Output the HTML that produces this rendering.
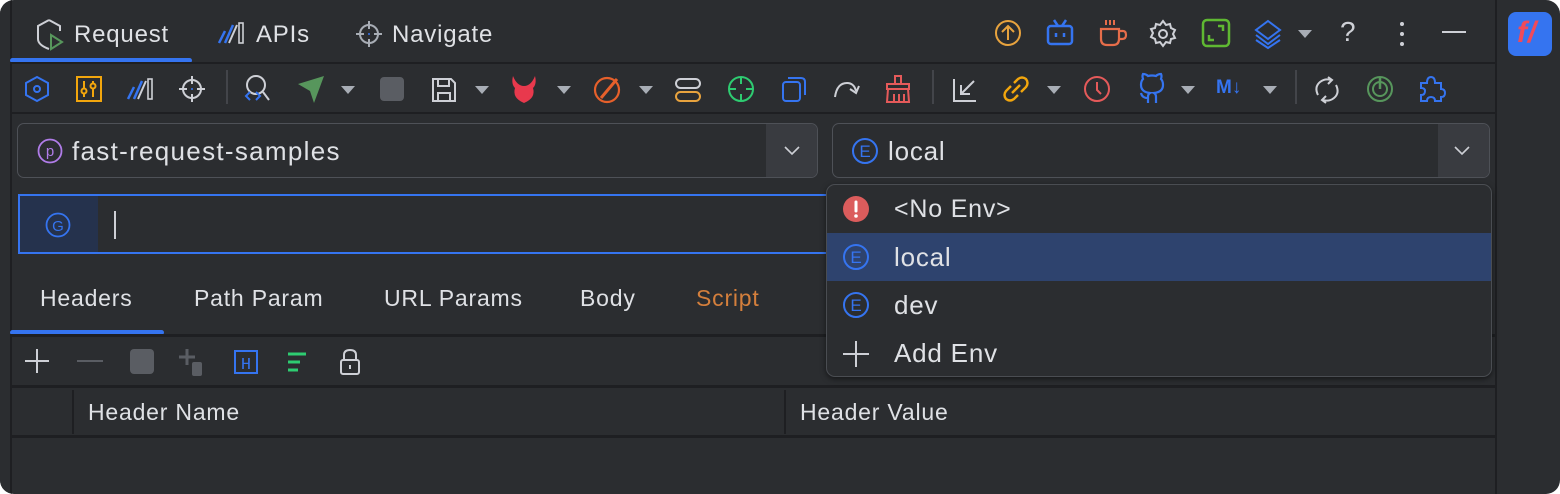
<!DOCTYPE html>
<html><head><meta charset="utf-8"><style>
html,body{margin:0;padding:0;background:#fff;width:1560px;height:494px;overflow:hidden}
#w{position:absolute;left:0;top:0;width:1560px;height:494px;background:#2b2d30;border-radius:14px;overflow:hidden;font-family:"Liberation Sans",sans-serif;color:#dfe1e5}
.a{position:absolute}
.hl{position:absolute;height:2px;background:#1e1f22}
svg{position:absolute;overflow:visible}
.t{position:absolute;font-size:23px;white-space:nowrap;letter-spacing:0.8px}
.dd{position:absolute;width:0;height:0;border-left:7px solid transparent;border-right:7px solid transparent;border-top:8px solid #a8adb5}
.sep{position:absolute;width:2px;background:#43454a}
</style></head><body><div id="w">
<div class="a" style="left:0;top:0;width:10px;height:494px;background:#2b2d30;border-right:2px solid #1e1f22"></div>
<div class="a" style="left:1495px;top:0;width:2px;height:494px;background:#1e1f22"></div>
<!-- tab bar -->
<svg style="left:36px;top:18px" width="30" height="32" viewBox="0 0 30 32"><path d="M13 2 L2 8 V21 Q2 27 13 31" fill="none" stroke="#ced0d6" stroke-width="2"/><path d="M13 2 L24 8 V13" fill="none" stroke="#ced0d6" stroke-width="2"/><path d="M15 17 L26 24 L15 31 Z" fill="none" stroke="#57965c" stroke-width="2"/></svg>
<div class="t" style="left:74px;top:21px;font-size:24px">Request</div>
<div class="a" style="left:10px;top:58px;width:182px;height:5px;background:#3574f0;border-radius:3px"></div>
<svg style="left:217px;top:21px" width="30" height="24"><path d="M2 22 L8 10 M8 22 L16 4" stroke="#3574f0" stroke-width="2.5"/><path d="M12 22 L20 4" stroke="#ced0d6" stroke-width="2"/><rect x="22" y="2" width="4" height="20" fill="none" stroke="#ced0d6" stroke-width="1.6"/></svg>
<div class="t" style="left:256px;top:21px;font-size:24px">APIs</div>
<svg style="left:355px;top:20px" width="28" height="28"><circle cx="14" cy="14" r="9" fill="none" stroke="#a8adb5" stroke-width="2"/><path d="M14 1V9M14 19V27M1 14H9M19 14H27" stroke="#a8adb5" stroke-width="2"/><circle cx="14" cy="14" r="1" fill="#3574f0"/></svg>
<div class="t" style="left:392px;top:21px;font-size:24px">Navigate</div>
<!-- top right icons -->
<svg style="left:994px;top:19px" width="28" height="28"><circle cx="14" cy="14" r="12" fill="none" stroke="#e8a33e" stroke-width="2"/><path d="M14 21V7M8 13L14 7L20 13" fill="none" stroke="#e8a33e" stroke-width="2"/></svg>
<svg style="left:1046px;top:19px" width="28" height="28"><rect x="2" y="7" width="24" height="18" rx="3" fill="none" stroke="#3574f0" stroke-width="2.5"/><path d="M8 1L12 7M20 1L16 7" stroke="#3574f0" stroke-width="2.5"/><path d="M10 14V18M18 14V18" stroke="#3574f0" stroke-width="2.5"/></svg>
<svg style="left:1098px;top:17px" width="30" height="30"><path d="M3 12H21V22Q21 28 15 28H9Q3 28 3 22Z" fill="none" stroke="#e66d4a" stroke-width="2.2"/><path d="M21 14H25Q28 14 28 18Q28 22 24 22H21" fill="none" stroke="#e66d4a" stroke-width="2.2"/><path d="M8 3V8M12 3V8M16 3V8" stroke="#e66d4a" stroke-width="2"/></svg>
<svg style="left:1149px;top:19px" width="28" height="28"><path d="M14 2l3 4 4-1 1 4 4 2-2 4 2 4-4 1-1 4-4-1-3 4-3-4-4 1-1-4-4-2 2-4-2-4 4-1 1-4 4 1z" fill="none" stroke="#ced0d6" stroke-width="2"/><circle cx="14" cy="15" r="4" fill="none" stroke="#ced0d6" stroke-width="2"/></svg>
<svg style="left:1202px;top:19px" width="28" height="28"><rect x="1" y="1" width="26" height="26" rx="4" fill="none" stroke="#5fb832" stroke-width="2.5"/><path d="M16 7H21V12M12 21H7V16" fill="none" stroke="#5fb832" stroke-width="2.5"/></svg>
<svg style="left:1253px;top:18px" width="30" height="30"><path d="M15 3L27 12L15 21L3 12Z" fill="none" stroke="#3574f0" stroke-width="2"/><path d="M3 17L15 26L27 17M3 22L15 30L27 22" fill="none" stroke="#3574f0" stroke-width="2"/></svg>
<div class="dd" style="left:1298px;top:30px"></div>
<div class="t" style="left:1340px;top:16px;font-size:28px;color:#ced0d6">?</div>
<div class="a" style="left:1400px;top:22px;width:4px;height:4px;border-radius:2px;background:#ced0d6;box-shadow:0 10px 0 #ced0d6,0 20px 0 #ced0d6"></div>
<div class="a" style="left:1442px;top:31px;width:24px;height:2px;background:#ced0d6"></div>
<div class="a" style="left:1508px;top:12px;width:44px;height:44px;border-radius:8px;background:#3574f0"></div>
<div class="t" style="left:1517px;top:16px;font-size:30px;font-weight:bold;color:#f04a5a;font-style:italic">f/</div>
<div class="hl" style="left:10px;top:62px;width:1485px"></div>
<!-- toolbar -->
<svg style="left:24px;top:76px" width="26" height="26"><path d="M13 1L24 7V19L13 25L2 19V7Z" fill="none" stroke="#3574f0" stroke-width="2"/><circle cx="13" cy="13" r="3" fill="none" stroke="#3574f0" stroke-width="2"/></svg>
<svg style="left:76px;top:76px" width="26" height="26"><rect x="1" y="1" width="24" height="24" fill="none" stroke="#f2a60d" stroke-width="2"/><path d="M8 5V21M17 5V21" stroke="#f2a60d" stroke-width="2"/><circle cx="8" cy="15" r="2.5" fill="#2b2d30" stroke="#f2a60d" stroke-width="2"/><circle cx="17" cy="10" r="2.5" fill="#2b2d30" stroke="#f2a60d" stroke-width="2"/></svg>
<svg style="left:126px;top:77px" width="30" height="24"><path d="M2 22 L8 10 M8 22 L16 4" stroke="#3574f0" stroke-width="2.5"/><path d="M12 22 L20 4" stroke="#ced0d6" stroke-width="2"/><rect x="22" y="2" width="4" height="20" fill="none" stroke="#ced0d6" stroke-width="1.6"/></svg>
<svg style="left:178px;top:75px" width="28" height="28"><circle cx="14" cy="14" r="9" fill="none" stroke="#ced0d6" stroke-width="2"/><path d="M14 1V9M14 19V27M1 14H9M19 14H27" stroke="#ced0d6" stroke-width="2"/><circle cx="14" cy="14" r="1" fill="#3574f0"/></svg>
<div class="sep" style="left:226px;top:70px;height:34px"></div>
<svg style="left:242px;top:74px" width="30" height="30"><circle cx="14" cy="11" r="9" fill="none" stroke="#ced0d6" stroke-width="2"/><path d="M21 18L27 26" stroke="#ced0d6" stroke-width="2"/><path d="M8 18L4 22L8 26M14 18L18 22L14 26" fill="none" stroke="#3574f0" stroke-width="2"/></svg>
<svg style="left:296px;top:75px" width="30" height="30"><path d="M2 9L28 1L18 28L14 16Z" fill="#57965c"/></svg>
<div class="dd" style="left:341px;top:86px"></div>
<div class="a" style="left:380px;top:77px;width:24px;height:24px;border-radius:4px;background:#5a5d63"></div>
<svg style="left:431px;top:77px" width="26" height="26"><path d="M2 2H20L24 6V24H2Z" fill="none" stroke="#ced0d6" stroke-width="2"/><path d="M7 2V9H18V2M7 24V16H19V24" fill="none" stroke="#ced0d6" stroke-width="2"/></svg>
<div class="dd" style="left:475px;top:86px"></div>
<svg style="left:509px;top:74px" width="30" height="30"><path d="M4 2Q2 10 6 14Q3 24 15 29Q27 24 24 14Q28 10 26 2Q22 12 15 12Q8 12 4 2Z" fill="#e8394d"/></svg>
<div class="dd" style="left:557px;top:86px"></div>
<svg style="left:593px;top:75px" width="30" height="30"><circle cx="14" cy="15" r="12" fill="none" stroke="#e6602b" stroke-width="2.2"/><path d="M8 23L24 4" stroke="#e6602b" stroke-width="3"/></svg>
<div class="dd" style="left:639px;top:86px"></div>
<svg style="left:675px;top:77px" width="26" height="26"><rect x="1" y="2" width="24" height="9" rx="4.5" fill="none" stroke="#ced0d6" stroke-width="2"/><rect x="1" y="15" width="24" height="9" rx="4.5" fill="none" stroke="#e8a33e" stroke-width="2"/></svg>
<svg style="left:727px;top:75px" width="28" height="28"><circle cx="14" cy="14" r="12" fill="none" stroke="#2ecc71" stroke-width="2"/><path d="M14 2V9M14 19V26M2 14H9M19 14H26" stroke="#2ecc71" stroke-width="2"/></svg>
<svg style="left:781px;top:76px" width="26" height="26"><rect x="2" y="6" width="17" height="19" rx="3" fill="none" stroke="#3574f0" stroke-width="2"/><path d="M7 2H20Q24 2 24 6V19" fill="none" stroke="#3574f0" stroke-width="2"/></svg>
<svg style="left:832px;top:79px" width="28" height="22"><path d="M3 18Q5 4 15 4Q22 4 24 12" fill="none" stroke="#ced0d6" stroke-width="2"/><path d="M18 10L24 14L27 7" fill="none" stroke="#ced0d6" stroke-width="2"/></svg>
<svg style="left:884px;top:74px" width="28" height="30"><rect x="11" y="2" width="6" height="8" fill="none" stroke="#e55a5a" stroke-width="2"/><path d="M3 10H25V15H3ZM4 15L3 28H25L24 15M10 20V28M15 20V28M20 20V28" fill="none" stroke="#e55a5a" stroke-width="2"/></svg>
<div class="sep" style="left:932px;top:70px;height:34px"></div>
<svg style="left:952px;top:77px" width="26" height="26"><path d="M2 2V24H24" fill="none" stroke="#ced0d6" stroke-width="2"/><path d="M22 4L9 17M9 8V17H18" fill="none" stroke="#ced0d6" stroke-width="2"/></svg>
<svg style="left:1002px;top:75px" width="28" height="28"><path d="M12 8L16 4Q20 1 24 4Q27 8 24 12L19 17M16 20L12 24Q8 27 4 24Q1 20 4 16L9 11M10 18L18 10" fill="none" stroke="#f2a60d" stroke-width="2.4"/></svg>
<div class="dd" style="left:1047px;top:86px"></div>
<svg style="left:1083px;top:75px" width="28" height="28"><circle cx="14" cy="14" r="12" fill="none" stroke="#e55a5a" stroke-width="2"/><path d="M14 7V15L18 19" fill="none" stroke="#e55a5a" stroke-width="2"/></svg>
<svg style="left:1136px;top:73px" width="32" height="32"><path d="M12 30V25Q6 25 5 20M20 30V24Q20 21 18 20Q27 19 27 12Q27 8 25 6Q26 3 25 1Q22 1 20 3Q16 2 12 3Q10 1 7 1Q6 3 7 6Q5 8 5 12Q5 19 14 20Q12 21 12 24" fill="none" stroke="#3574f0" stroke-width="2.2"/></svg>
<div class="dd" style="left:1181px;top:86px"></div>
<div class="t" style="left:1216px;top:77px;font-size:19px;font-weight:bold;color:#3574f0;letter-spacing:0">M↓</div>
<div class="dd" style="left:1263px;top:86px"></div>
<div class="sep" style="left:1295px;top:70px;height:34px"></div>
<svg style="left:1312px;top:75px" width="30" height="30"><path d="M6 20Q2 12 8 7Q13 3 19 5M24 10Q28 18 22 23Q17 27 11 25" fill="none" stroke="#ced0d6" stroke-width="2"/><path d="M16 2L20 5L16 9M14 28L10 25L14 21" fill="none" stroke="#ced0d6" stroke-width="2"/></svg>
<svg style="left:1366px;top:75px" width="28" height="28"><circle cx="14" cy="14" r="12" fill="none" stroke="#57965c" stroke-width="2"/><circle cx="14" cy="14" r="7" fill="none" stroke="#57965c" stroke-width="2"/><path d="M14 3V14" stroke="#57965c" stroke-width="2.5"/></svg>
<svg style="left:1418px;top:75px" width="28" height="28"><path d="M3 8H9Q9 2 13 2Q17 2 17 8H23V14Q27 14 27 18Q27 22 23 22V26H17Q17 22 13 22Q9 22 9 26H3V20Q7 20 7 16Q7 13 3 13Z" fill="none" stroke="#3574f0" stroke-width="2"/></svg>
<div class="hl" style="left:10px;top:112px;width:1485px"></div>
<!-- project combo -->
<div class="a" style="left:17px;top:123px;width:799px;height:53px;border:1px solid #4e5157;border-radius:7px;overflow:hidden">
 <div class="a" style="right:0;top:0;width:51px;height:53px;background:#393b40"></div>
</div>
<svg style="left:784px;top:146px" width="16" height="10"><path d="M1 1L8 8L15 1" fill="none" stroke="#ced0d6" stroke-width="1.6"/></svg>
<svg style="left:37px;top:138px" width="26" height="26"><circle cx="13" cy="13" r="11.5" fill="none" stroke="#b07ce8" stroke-width="1.8"/><text x="13" y="18" font-size="15" fill="#b07ce8" text-anchor="middle" font-family="Liberation Sans">p</text></svg>
<div class="t" style="left:72px;top:136px;font-size:26px;letter-spacing:1.3px">fast-request-samples</div>
<!-- env combo -->
<div class="a" style="left:832px;top:123px;width:656px;height:53px;border:1px solid #4e5157;border-radius:7px;overflow:hidden">
 <div class="a" style="right:0;top:0;width:51px;height:53px;background:#393b40"></div>
</div>
<svg style="left:1454px;top:146px" width="16" height="10"><path d="M1 1L8 8L15 1" fill="none" stroke="#ced0d6" stroke-width="1.6"/></svg>
<svg style="left:851px;top:137px" width="28" height="28"><circle cx="14" cy="14" r="12" fill="none" stroke="#3574f0" stroke-width="2"/><text x="14" y="20" font-size="17" fill="#3574f0" text-anchor="middle" font-family="Liberation Sans">E</text></svg>
<div class="t" style="left:888px;top:136px;font-size:26px">local</div>
<!-- url input -->
<div class="a" style="left:18px;top:194px;width:820px;height:56px;border:2px solid #3574f0;">
 <div class="a" style="left:0;top:0;width:78px;height:56px;background:#25324d"></div>
 <div class="a" style="left:94px;top:15px;width:2px;height:28px;background:#ced0d6"></div>
</div>
<svg style="left:45px;top:212px" width="26" height="26"><circle cx="13" cy="13" r="11.5" fill="none" stroke="#3574f0" stroke-width="1.8"/><text x="13" y="19" font-size="15" fill="#3574f0" text-anchor="middle" font-family="Liberation Sans">G</text></svg>
<!-- sub tabs -->
<div class="t" style="left:40px;top:285px">Headers</div>
<div class="t" style="left:194px;top:285px">Path Param</div>
<div class="t" style="left:384px;top:285px">URL Params</div>
<div class="t" style="left:580px;top:285px">Body</div>
<div class="t" style="left:696px;top:285px;color:#d47f3c">Script</div>
<div class="a" style="left:10px;top:330px;width:154px;height:5px;background:#3574f0;border-radius:3px"></div>
<div class="hl" style="left:10px;top:334px;width:1485px;height:3px"></div>
<!-- small toolbar -->
<svg style="left:24px;top:348px" width="26" height="26"><path d="M13 1V25M1 13H25" stroke="#ced0d6" stroke-width="2"/></svg>
<div class="a" style="left:77px;top:360px;width:26px;height:2px;background:#5a5d63"></div>
<div class="a" style="left:130px;top:349px;width:24px;height:25px;border-radius:4px;background:#5a5d63"></div>
<svg style="left:178px;top:348px" width="32" height="28"><path d="M9 1V17M1 9H17" stroke="#5a5d63" stroke-width="3"/><rect x="14" y="14" width="10" height="14" rx="2" fill="#5a5d63"/></svg>
<svg style="left:234px;top:350px" width="26" height="26"><rect x="1" y="1" width="22" height="22" fill="none" stroke="#3574f0" stroke-width="2"/><text x="12" y="19" font-size="17" fill="#3574f0" text-anchor="middle" font-family="Liberation Mono">H</text></svg>
<svg style="left:286px;top:352px" width="26" height="22"><path d="M2 2H20M2 10H14M2 18H12" stroke="#2ecc71" stroke-width="3"/></svg>
<svg style="left:338px;top:347px" width="24" height="30"><path d="M6 13V8Q6 3 12 3Q18 3 18 8V13" fill="none" stroke="#ced0d6" stroke-width="2"/><rect x="3" y="13" width="18" height="14" rx="2" fill="none" stroke="#ced0d6" stroke-width="2"/><path d="M12 18V22" stroke="#ced0d6" stroke-width="2"/></svg>
<div class="hl" style="left:10px;top:385px;width:1485px;height:3px"></div>
<!-- table header -->
<div class="a" style="left:72px;top:390px;width:2px;height:44px;background:#1e1f22"></div>
<div class="a" style="left:784px;top:390px;width:2px;height:44px;background:#1e1f22"></div>
<div class="t" style="left:88px;top:399px">Header Name</div>
<div class="t" style="left:800px;top:399px">Header Value</div>
<div class="hl" style="left:10px;top:435px;width:1485px;height:3px"></div>
<!-- popup -->
<div class="a" style="left:826px;top:184px;width:664px;height:191px;background:#2b2d30;border:1px solid #4a4d52;border-radius:9px;box-shadow:0 2px 6px rgba(0,0,0,.5);overflow:hidden">
 <div class="a" style="left:0;top:48px;width:664px;height:48px;background:#2e436e"></div>
</div>
<svg style="left:842px;top:195px" width="28" height="28"><circle cx="14" cy="14" r="13" fill="#db5c5c"/><path d="M14 7V16" stroke="#fff" stroke-width="3" stroke-linecap="round"/><circle cx="14" cy="21" r="1.8" fill="#fff"/></svg>
<div class="t" style="left:894px;top:195px;font-size:25px">&lt;No Env&gt;</div>
<svg style="left:842px;top:243px" width="28" height="28"><circle cx="14" cy="14" r="12" fill="none" stroke="#3574f0" stroke-width="2"/><text x="14" y="20" font-size="17" fill="#3574f0" text-anchor="middle" font-family="Liberation Sans">E</text></svg>
<div class="t" style="left:894px;top:242px;font-size:26px">local</div>
<svg style="left:842px;top:291px" width="28" height="28"><circle cx="14" cy="14" r="12" fill="none" stroke="#3574f0" stroke-width="2"/><text x="14" y="20" font-size="17" fill="#3574f0" text-anchor="middle" font-family="Liberation Sans">E</text></svg>
<div class="t" style="left:894px;top:290px;font-size:26px">dev</div>
<svg style="left:842px;top:340px" width="28" height="28"><path d="M14 1V27M1 14H27" stroke="#ced0d6" stroke-width="2"/></svg>
<div class="t" style="left:894px;top:338px;font-size:26px">Add Env</div>
</div></body></html>
